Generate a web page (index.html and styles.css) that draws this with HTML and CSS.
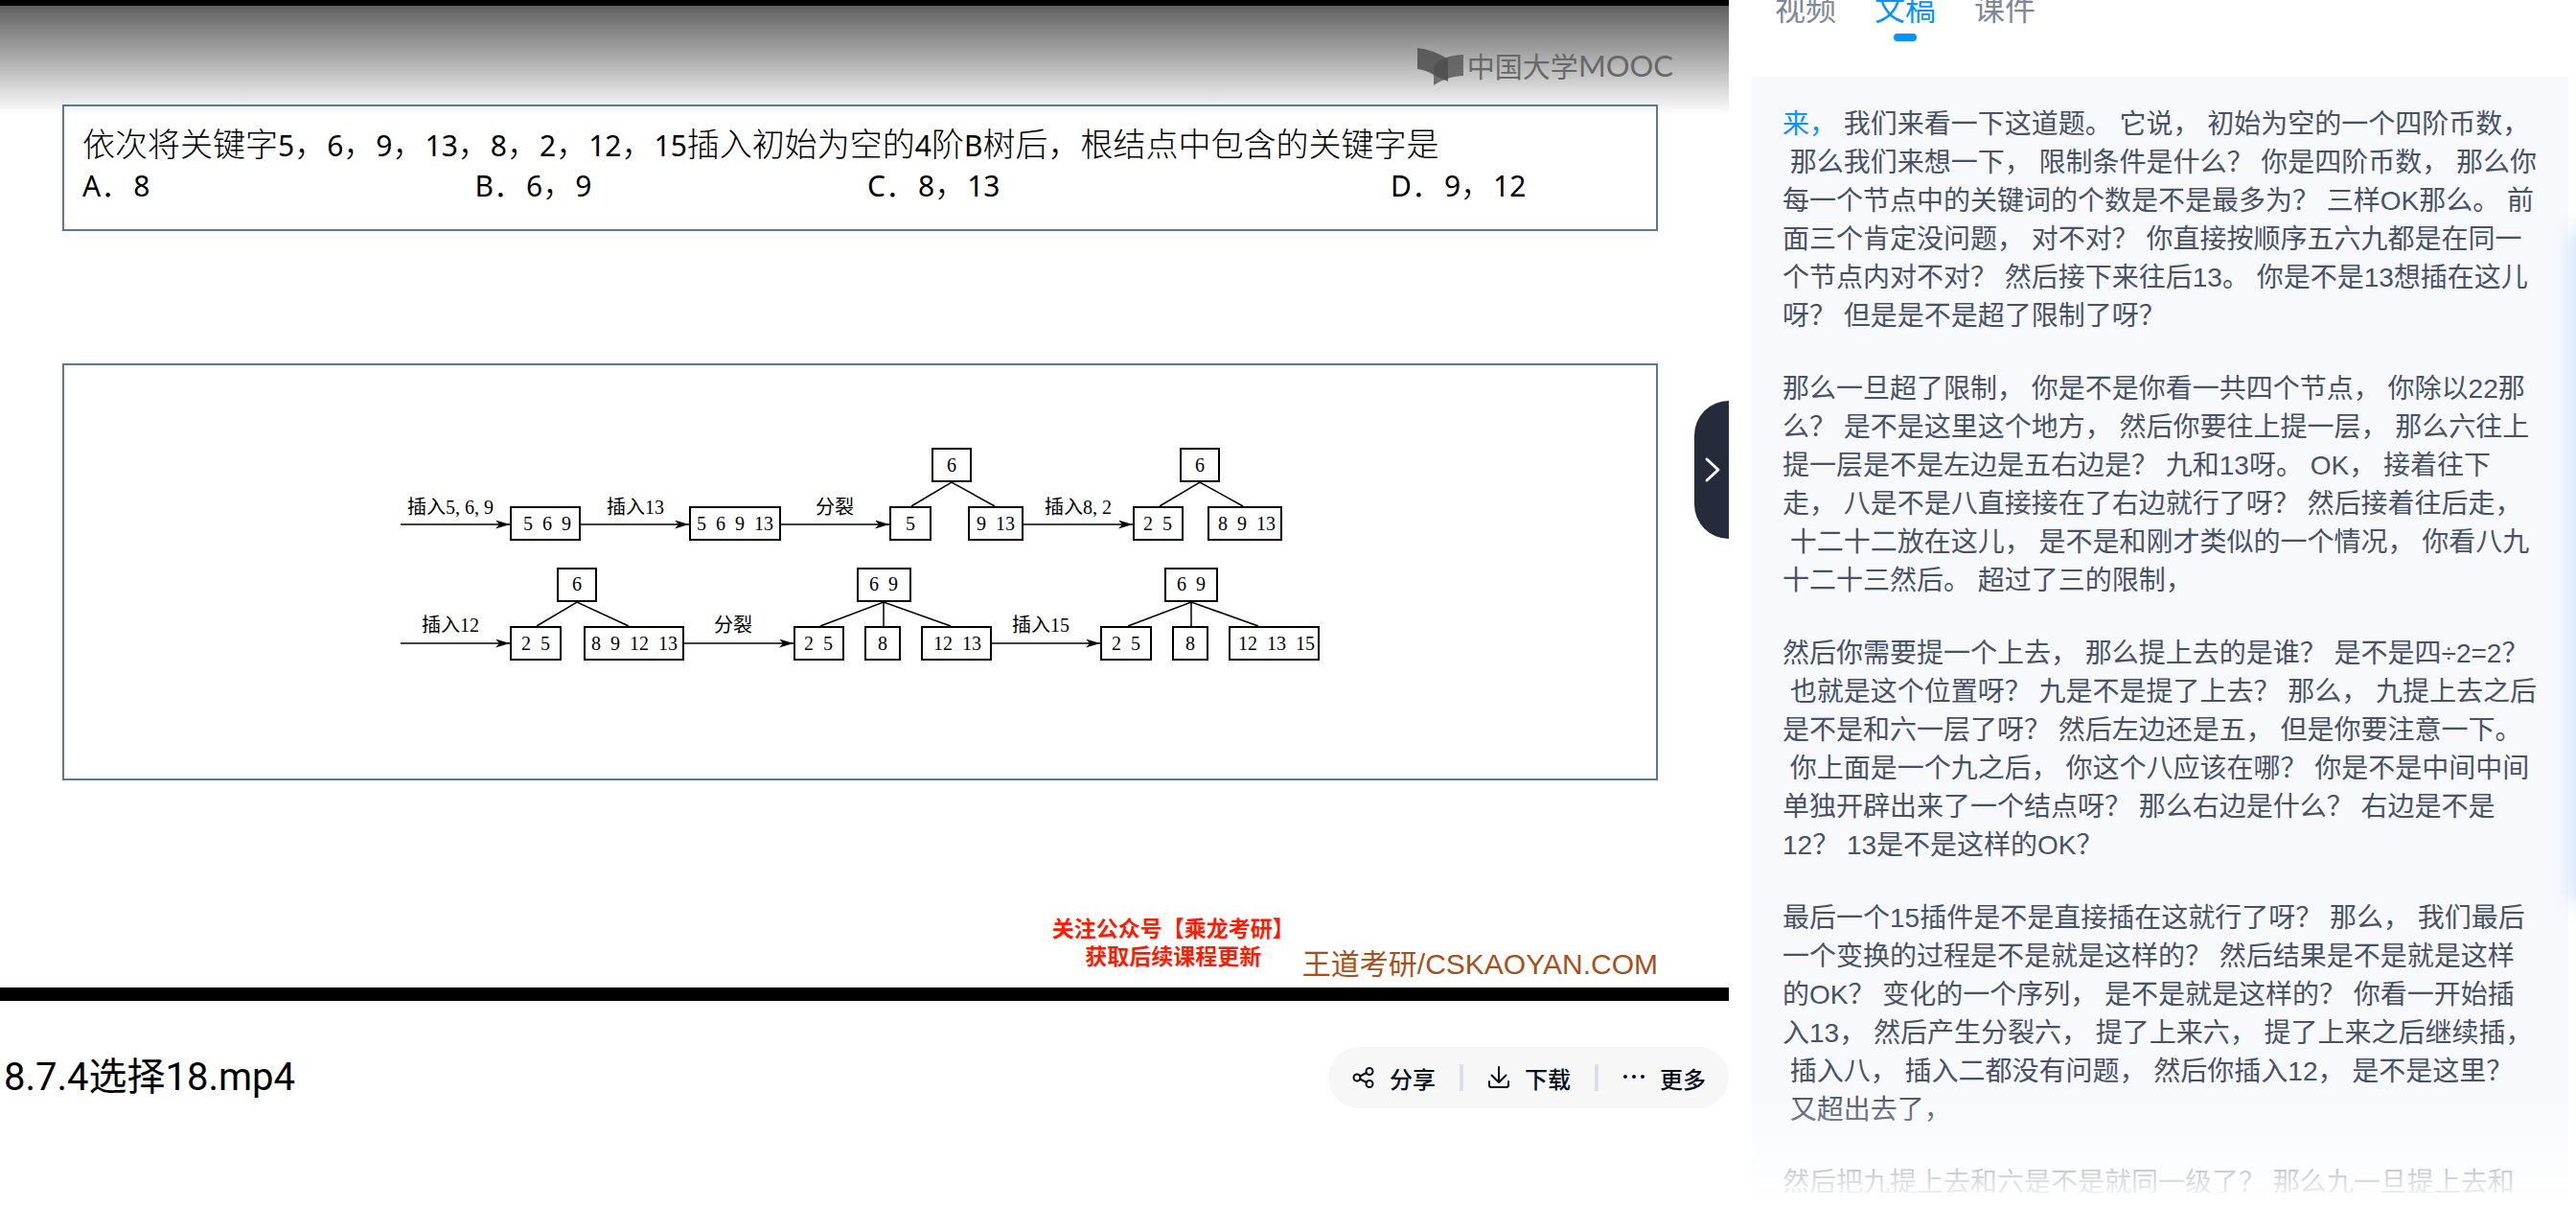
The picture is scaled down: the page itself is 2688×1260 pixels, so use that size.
FILE: index.html
```html
<!DOCTYPE html>
<html lang="zh-CN">
<head>
<meta charset="utf-8">
<meta name="viewport" content="width=device-width, initial-scale=1">
<title>8.7.4选择18.mp4</title>
<link rel="stylesheet" href="styles.css">
</head>
<body>
<div class="page">
  <main class="main">
    <section class="player">
      <div class="slide">
        <header class="slide-head">
          <div class="mooc">
            <svg class="mooc-icon" viewBox="0 0 48 40" aria-hidden="true">
              <path d="M0 0Q18 2 32 12V35L17 28Q9 23 0 22Z" fill="#4d4d4d" fill-opacity=".85"/>
              <path d="M48 7V29Q30 30 17 39V23Q18 9 48 7Z" fill="#4d4d4d" fill-opacity=".75"/>
            </svg>
            <span class="mooc-cn">中国大学</span><span class="mooc-en">MOOC</span>
          </div>
        </header>

        <div class="frame question">
          <p class="stem">依次将关键字<span class="num">5</span>，<span class="num">6</span>，<span class="num">9</span>，<span class="num">13</span>，<span class="num">8</span>，<span class="num">2</span>，<span class="num">12</span>，<span class="num">15</span>插入初始为空的<span class="num">4</span>阶<span class="num">B</span>树后，根结点中包含的关键字是</p>
          <ul class="options">
            <li><span class="num">A</span>．<span class="num">8</span></li>
            <li><span class="num">B</span>．<span class="num">6</span>，<span class="num">9</span></li>
            <li><span class="num">C</span>．<span class="num">8</span>，<span class="num">13</span></li>
            <li><span class="num">D</span>．<span class="num">9</span>，<span class="num">12</span></li>
          </ul>
        </div>

        <div class="frame diagram">
          <svg class="tree" viewBox="67 381 1661 431" role="img" aria-label="4阶B树插入过程">
            <defs>
              <marker id="arrow" viewBox="0 0 15 9" refX="15" refY="4.5" markerWidth="15" markerHeight="9" markerUnits="userSpaceOnUse" orient="auto">
                <path d="M0 0L15 4.5L0 9L4 4.5Z"/>
              </marker>
            </defs>
            <g class="arrows" marker-end="url(#arrow)">
              <path d="M418 547H532"/>
              <path d="M606 547H719"/>
              <path d="M815 547H928"/>
              <path d="M1067 547H1182"/>
              <path d="M418 671H532"/>
              <path d="M713 671H828"/>
              <path d="M1034 671H1148"/>
            </g>
            <g class="edges">
              <path d="M951 528L993 503L1038 528"/>
              <path d="M1210 528L1252 503L1297 528"/>
              <path d="M560 653L602 628L656 653"/>
              <path d="M856 653L922 628L992 653M922 628V653"/>
              <path d="M1177 653L1243 628L1313 653M1243 628V653"/>
            </g>
            <g class="nodes">
              <rect x="533" y="529" width="72" height="34"/>
              <rect x="720" y="529" width="94" height="34"/>
              <rect x="973" y="468" width="40" height="34"/>
              <rect x="929" y="529" width="42" height="34"/>
              <rect x="1011" y="529" width="56" height="34"/>
              <rect x="1232" y="468" width="40" height="34"/>
              <rect x="1183" y="529" width="51" height="34"/>
              <rect x="1261" y="529" width="76" height="34"/>
              <rect x="582" y="593" width="40" height="34"/>
              <rect x="533" y="654" width="52" height="34"/>
              <rect x="610" y="654" width="103" height="34"/>
              <rect x="895" y="593" width="55" height="34"/>
              <rect x="829" y="654" width="51" height="34"/>
              <rect x="903" y="654" width="36" height="34"/>
              <rect x="962" y="654" width="72" height="34"/>
              <rect x="1216" y="593" width="54" height="34"/>
              <rect x="1149" y="654" width="52" height="34"/>
              <rect x="1224" y="654" width="36" height="34"/>
              <rect x="1283" y="654" width="93" height="34"/>
            </g>
            <g class="labels">
              <text x="470" y="536">插入5, 6, 9</text>
              <text x="663" y="536">插入13</text>
              <text x="871" y="536">分裂</text>
              <text x="1125" y="536">插入8, 2</text>
              <text x="470" y="659">插入12</text>
              <text x="765" y="659">分裂</text>
              <text x="1086" y="659">插入15</text>
              <text x="571" y="553">5&nbsp; 6&nbsp; 9</text>
              <text x="767" y="553">5&nbsp; 6&nbsp; 9&nbsp; 13</text>
              <text x="993" y="492">6</text>
              <text x="950" y="553">5</text>
              <text x="1039" y="553">9&nbsp; 13</text>
              <text x="1252" y="492">6</text>
              <text x="1208" y="553">2&nbsp; 5</text>
              <text x="1301" y="553">8&nbsp; 9&nbsp; 13</text>
              <text x="602" y="616">6</text>
              <text x="559" y="678">2&nbsp; 5</text>
              <text x="662" y="678">8&nbsp; 9&nbsp; 12&nbsp; 13</text>
              <text x="922" y="616">6&nbsp; 9</text>
              <text x="854" y="678">2&nbsp; 5</text>
              <text x="921" y="678">8</text>
              <text x="999" y="678">12&nbsp; 13</text>
              <text x="1243" y="616">6&nbsp; 9</text>
              <text x="1175" y="678">2&nbsp; 5</text>
              <text x="1242" y="678">8</text>
              <text x="1332" y="678">12&nbsp; 13&nbsp; 15</text>
            </g>
          </svg>
        </div>

        <footer class="slide-foot">
          <p class="promo">关注公众号【乘龙考研】<br>获取后续课程更新</p>
          <p class="site">王道考研/CSKAOYAN.COM</p>
        </footer>
      </div>
      <button class="collapse" type="button" aria-label="收起侧栏">
        <svg viewBox="0 0 36 36" aria-hidden="true"><path d="M13 7L25 18L13 29"/></svg>
      </button>
    </section>

    <section class="file-bar">
      <h1 class="file-name">8.7.4选择18.mp4</h1>
      <div class="actions">
        <button type="button">
          <svg viewBox="0 0 24 24" aria-hidden="true"><circle cx="5" cy="12" r="3.5"/><circle cx="18" cy="5.5" r="3.5"/><circle cx="18" cy="18.5" r="3.5"/><path d="M8 10.5L15 7M8 13.5L15 17"/></svg>
          <span>分享</span>
        </button>
        <button type="button">
          <svg viewBox="0 0 24 24" aria-hidden="true"><path d="M12 1V17M4.5 9.5L12 17L19.5 9.5M2 16V20Q2 22 4 22H20Q22 22 22 20V16"/></svg>
          <span>下载</span>
        </button>
        <button type="button">
          <svg class="dots" viewBox="0 0 24 24" aria-hidden="true"><circle cx="3" cy="11" r="2"/><circle cx="12" cy="11" r="2"/><circle cx="21" cy="11" r="2"/></svg>
          <span>更多</span>
        </button>
      </div>
    </section>
  </main>

  <aside class="side">
    <nav class="tabs">
      <a href="#video">视频</a>
      <a href="#script" class="active" aria-current="page">文稿</a>
      <a href="#slides">课件</a>
    </nav>
    <article class="transcript" id="script">
<p><span class="now">来，</span> 我们来看一下这道题。 它说， 初始为空的一个四阶币数，
 那么我们来想一下， 限制条件是什么？ 你是四阶币数， 那么你
每一个节点中的关键词的个数是不是最多为？ 三样OK那么。 前
面三个肯定没问题， 对不对？ 你直接按顺序五六九都是在同一
个节点内对不对？ 然后接下来往后13。 你是不是13想插在这儿
呀？ 但是是不是超了限制了呀？</p>
<p>那么一旦超了限制， 你是不是你看一共四个节点， 你除以22那
么？ 是不是这里这个地方， 然后你要往上提一层， 那么六往上
提一层是不是左边是五右边是？ 九和13呀。 OK， 接着往下
走， 八是不是八直接接在了右边就行了呀？ 然后接着往后走，
 十二十二放在这儿， 是不是和刚才类似的一个情况， 你看八九
十二十三然后。 超过了三的限制，</p>
<p>然后你需要提一个上去， 那么提上去的是谁？ 是不是四÷2=2？
 也就是这个位置呀？ 九是不是提了上去？ 那么， 九提上去之后
是不是和六一层了呀？ 然后左边还是五， 但是你要注意一下。
 你上面是一个九之后， 你这个八应该在哪？ 你是不是中间中间
单独开辟出来了一个结点呀？ 那么右边是什么？ 右边是不是
12？ 13是不是这样的OK？</p>
<p>最后一个15插件是不是直接插在这就行了呀？ 那么， 我们最后
一个变换的过程是不是就是这样的？ 然后结果是不是就是这样
的OK？ 变化的一个序列， 是不是就是这样的？ 你看一开始插
入13， 然后产生分裂六， 提了上来六， 提了上来之后继续插，
 插入八， 插入二都没有问题， 然后你插入12， 是不是这里？
 又超出去了，</p>
<p>然后把九提上去和六是不是就同一级了？ 那么九一旦提上去和</p>
    </article>
  </aside>
</div>
<div class="edge-glow"></div>
</body>
</html>
```

FILE: styles.css
```css
* { box-sizing: border-box; }

body,
h1,
p,
ul {
  margin: 0;
  padding: 0;
}

body {
  background: #fff;
  color: #000;
  font-family: Roboto, "Noto Sans CJK SC", sans-serif;
  overflow: hidden;
}

button {
  border: 0;
  background: none;
  color: inherit;
  font: inherit;
  cursor: pointer;
}

.page {
  display: grid;
  grid-template-columns: minmax(0, 1fr) 852px;
  column-gap: 24px;
  padding-right: 8px;
}

/* Video */
.player {
  position: relative;
  padding: 6px 0 14px;
  background: #000;
}

.slide {
  display: flex;
  flex-direction: column;
  padding: 0 74px 12px 65px;
  background: linear-gradient(#606060, #fff 114px) #fff;
}

.slide-head {
  display: flex;
  justify-content: flex-end;
  height: 103px;
  margin-right: -16px;
  padding-top: 44px;
}

.mooc {
  display: flex;
  height: 40px;
  color: #686868;
  line-height: 36px;
}

.mooc-icon {
  width: 48px;
  height: 40px;
  margin-right: 4px;
}

.mooc-cn {
  font-family: "Noto Sans CJK SC", sans-serif;
  font-size: 29px;
}

.mooc-en {
  font-family: Lato, sans-serif;
  font-size: 31px;
}

.frame {
  border: 2px solid #5b7896;
}

.question {
  height: 132px;
  padding: 17px 4px 0 19px;
  font-family: "Noto Sans CJK SC", sans-serif;
  font-size: 34px;
  font-weight: 300;
  line-height: 42px;
  white-space: nowrap;
}

.num {
  font-family: "Noto Sans", sans-serif;
  font-size: 30px;
  font-weight: 400;
  line-height: 30px;
}

.options {
  display: grid;
  grid-template-columns: 3fr 3fr 4fr 2fr;
  list-style: none;
}

.diagram {
  margin-top: 138px;
}

.tree {
  display: block;
  width: 100%;
  height: auto;
}

.arrows,
.edges {
  fill: none;
  stroke: #000;
  stroke-width: 1.5;
}

.nodes {
  fill: none;
  stroke: #000;
  stroke-width: 2;
}

.labels {
  font-family: "Liberation Serif", "Noto Sans CJK SC", serif;
  font-size: 20px;
  text-anchor: middle;
}

.slide-foot {
  display: flex;
  justify-content: flex-end;
  align-items: flex-end;
  height: 204px;
}

.promo {
  margin-right: 8px;
  padding-bottom: 7px;
  color: #fc1c04;
  font-family: "Noto Sans CJK SC", sans-serif;
  font-size: 23px;
  font-weight: 700;
  line-height: 29px;
  text-align: center;
}

.site {
  color: #a9501a;
  font-family: "Liberation Sans", "Noto Sans CJK SC", sans-serif;
  font-size: 30px;
  line-height: 24px;
}

.collapse {
  position: absolute;
  top: 418px;
  right: 0;
  display: grid;
  place-items: center;
  width: 36px;
  height: 144px;
  padding: 0;
  border-radius: 36px 0 0 36px;
  background: #252b3a;
}

.collapse svg {
  width: 36px;
  height: 36px;
  fill: none;
  stroke: #fff;
  stroke-width: 3;
  stroke-linecap: round;
  stroke-linejoin: round;
}

/* File title and actions */
.file-bar {
  display: flex;
  justify-content: space-between;
  align-items: center;
  margin-top: 48px;
  padding-left: 4px;
}

.file-name {
  font-size: 40px;
  font-weight: 400;
  line-height: 64px;
}

.actions {
  display: flex;
  align-items: center;
  height: 64px;
  border-radius: 32px;
  background: #f7f7f7;
  color: #050f1e;
  font-size: 24px;
  font-weight: 500;
}

.actions button {
  display: flex;
  align-items: center;
  gap: 15px;
  height: 28px;
  padding: 0 25px;
}

.actions button:last-child {
  padding-right: 24px;
}

.actions button + button {
  border-left: 4px solid #dcdfe8;
}

.actions svg {
  width: 24px;
  height: 24px;
  fill: none;
  stroke: currentColor;
  stroke-width: 2;
  stroke-linecap: round;
  stroke-linejoin: round;
}

.actions .dots {
  fill: currentColor;
  stroke: none;
}

/* Side panel */
.tabs {
  display: flex;
  gap: 40px;
  height: 80px;
  padding-left: 24px;
  font-size: 32px;
  line-height: 20px;
}

.tabs a {
  color: #7e8799;
  text-decoration: none;
}

.tabs .active {
  color: #0693ff;
}

.tabs .active::after {
  content: "";
  display: block;
  width: 24px;
  height: 8px;
  margin: 15px auto 0;
  border-radius: 4px;
  background: #0693ff;
}

.transcript {
  position: relative;
  height: calc(100vh - 96px);
  padding: 30px 32px 0;
  overflow: hidden;
  background: #f8f9fd;
  color: #485266;
  font-family: "Liberation Sans", "Noto Sans CJK SC", sans-serif;
  font-size: 28px;
  line-height: 40px;
}

.transcript p {
  white-space: pre;
}

.transcript p + p {
  margin-top: 36px;
}

.transcript::after {
  content: "";
  position: absolute;
  right: 0;
  bottom: 0;
  left: 0;
  height: 104px;
  background: linear-gradient(rgba(255, 255, 255, 0), rgba(255, 255, 255, 0.9));
}

.now {
  color: #0693ff;
}

/* Shadow cast by the panel docked past the right edge */
.edge-glow {
  position: fixed;
  top: 240px;
  left: 100%;
  width: 40px;
  height: 700px;
  box-shadow: 0 0 24px rgba(60, 125, 250, 0.38);
}
```
